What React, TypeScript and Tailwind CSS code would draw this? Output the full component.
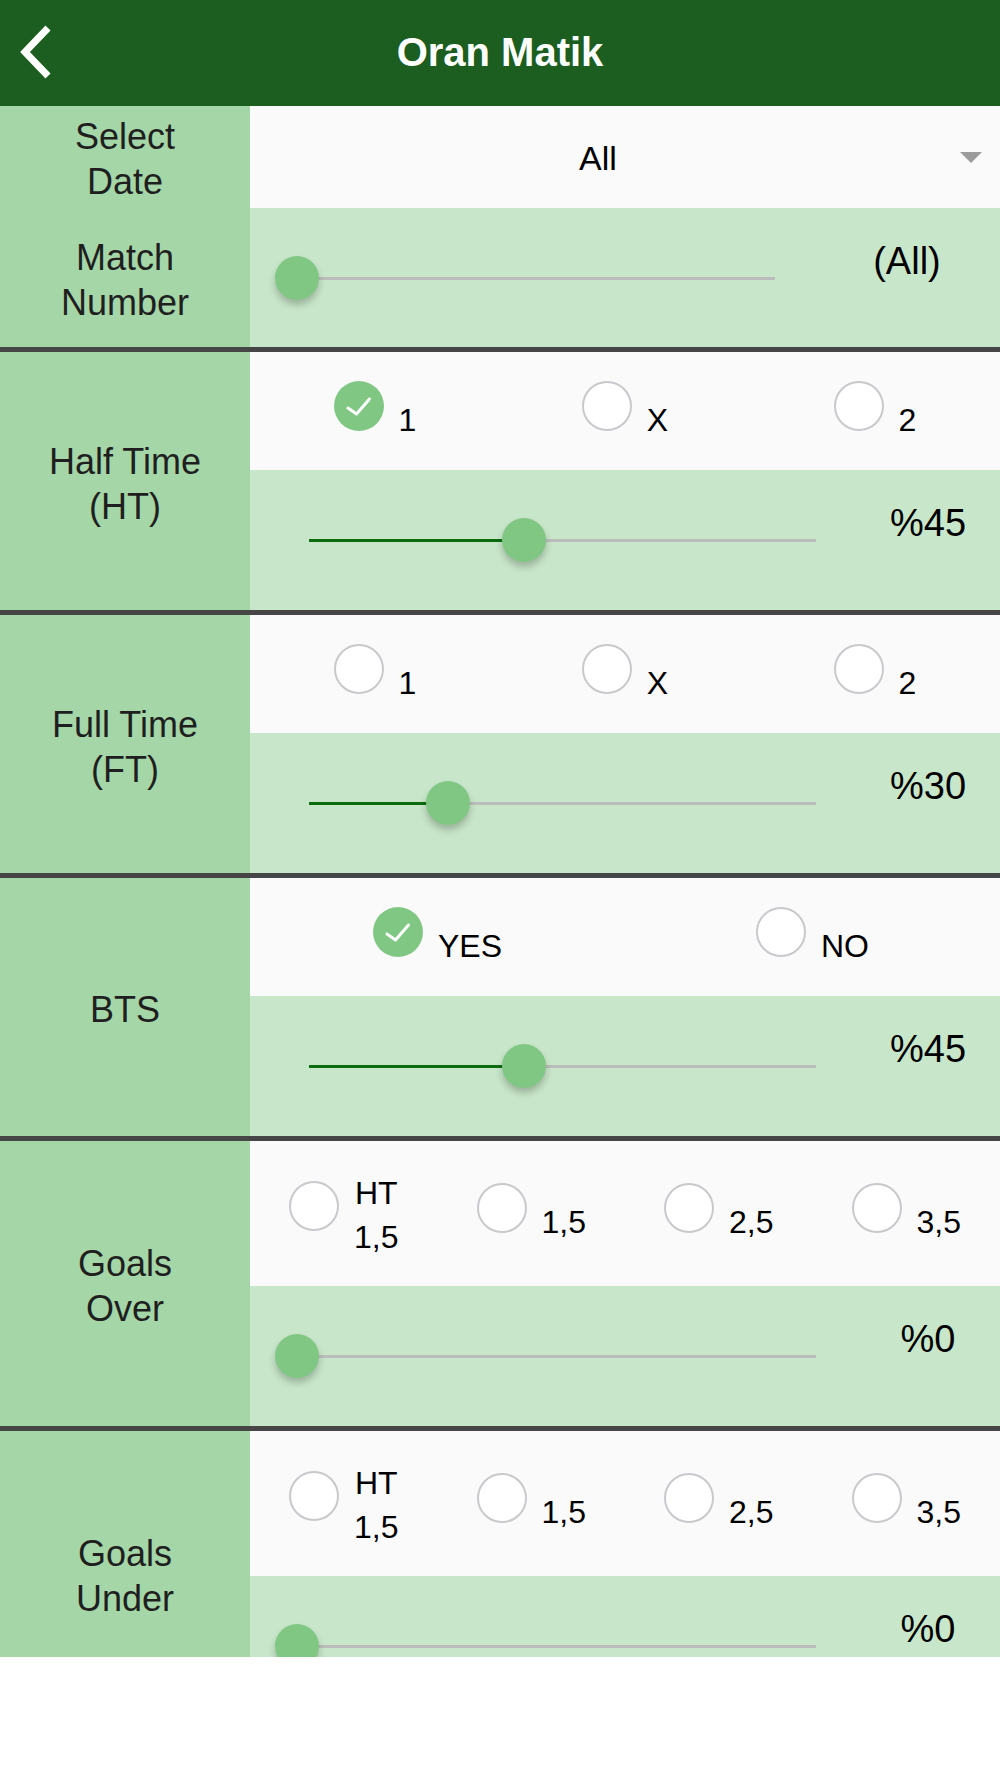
import React from "react";

type Opt = { label: string[]; checked?: boolean };

const FONT = "font-['Liberation_Sans',Arial,sans-serif]";

function Radio({ checked, className = "" }: { checked?: boolean; className?: string }) {
  if (checked) {
    return (
      <div className={`w-[50px] h-[50px] shrink-0 rounded-full bg-[#81c784] ${className}`}>
        <svg width="50" height="50" viewBox="0 0 50 50" fill="none">
          <path d="M14 27 L22.5 33 L35.5 18" stroke="white" strokeWidth={3} strokeLinecap="round" strokeLinejoin="round" />
        </svg>
      </div>
    );
  }
  return <div className={`w-[50px] h-[50px] shrink-0 rounded-full bg-white border-2 border-[#c9c9cd] ${className}`} />;
}

function Option({ opt }: { opt: Opt }) {
  const twoLine = opt.label.length > 1;
  return (
    <div className="flex flex-1 justify-center">
      <div className="flex items-start">
        <Radio checked={opt.checked} className={twoLine ? "mt-[12px]" : ""} />
        <div className={`ml-[15px] text-[32px] leading-[44px] text-center text-black ${twoLine ? "mt-[2px]" : "mt-[17px]"}`}>
          {opt.label.map((l) => (
            <div key={l}>{l}</div>
          ))}
        </div>
      </div>
    </div>
  );
}

function OptionsRow({ options, tall }: { options: Opt[]; tall?: boolean }) {
  return (
    <div className={`flex items-center bg-[#fafafa] ${tall ? "h-[145px]" : "h-[118px]"}`}>
      {options.map((o) => (
        <Option key={o.label.join(" ")} opt={o} />
      ))}
    </div>
  );
}

// thumb centre moves 5.04px per percent, starting at 47px from the panel edge
function Slider({ value, text, short }: { value: number; text: string; short?: boolean }) {
  const thumbX = 47 + value * 5.04;
  return (
    <div className="flex h-full">
      <div className={`relative h-full shrink-0 ${short ? "w-[564px]" : "w-[606px]"}`}>
        <div className={`absolute left-[59px] top-[69px] h-[3px] bg-[#bcbcbc] ${short ? "w-[466px]" : "w-[507px]"}`} />
        {value > 0 && (
          <div className="absolute left-[59px] top-[69px] h-[3px] bg-[#0d6b10]" style={{ width: thumbX - 59 }} />
        )}
        <div
          className="absolute top-[48px] w-[44px] h-[44px] rounded-full bg-[#81c784] shadow-[0_5px_7px_rgba(0,0,0,0.22)]"
          style={{ left: thumbX - 22 }}
        />
      </div>
      <div className="flex-1 pt-[31px] text-center text-[38px] leading-[44px] text-black">{text}</div>
    </div>
  );
}

function Section({
  label,
  options,
  value,
  text,
  tall,
}: {
  label: string[];
  options: Opt[];
  value: number;
  text: string;
  tall?: boolean;
}) {
  return (
    <div className="flex shrink-0">
      <div className="w-[250px] shrink-0 bg-[#a5d6a7] pt-[5px] flex flex-col items-center justify-center text-[36px] leading-[45px] text-[#1f1f1f] text-center">
        {label.map((l) => (
          <div key={l}>{l}</div>
        ))}
      </div>
      <div className="flex-1 flex flex-col">
        <OptionsRow options={options} tall={tall} />
        <div className="h-[140px] bg-[#c8e6c9]">
          <Slider value={value} text={text} />
        </div>
      </div>
    </div>
  );
}

function Divider() {
  return <div className="h-[5px] shrink-0 bg-[#464646]" />;
}

const goals: Opt[] = [{ label: ["HT", "1,5"] }, { label: ["1,5"] }, { label: ["2,5"] }, { label: ["3,5"] }];

export default function App() {
  return (
    <main className={`w-[1000px] h-[1778px] bg-white ${FONT}`}>
      {/* header */}
      <div className="flex items-center h-[106px] bg-[#1b5e20] pb-[3px]">
        <div className="w-[120px] pl-[19px]">
          <svg width="34" height="54" viewBox="0 0 34 54" fill="none">
            <path d="M29 3 L6 27 L29 51" stroke="white" strokeWidth={7} />
          </svg>
        </div>
        <h1 className="flex-1 text-center text-[40px] font-bold text-white">Oran Matik</h1>
        <div className="w-[120px]" />
      </div>

      <div className="h-[1551px] overflow-hidden flex flex-col">
        {/* date + match number */}
        <div className="flex h-[102px] shrink-0">
          <div className="w-[250px] shrink-0 bg-[#a5d6a7] pt-[3px] flex flex-col items-center justify-center text-[36px] leading-[45px] text-[#1f1f1f]">
            <div>Select</div>
            <div>Date</div>
          </div>
          <div className="flex-1 flex items-center bg-[#fafafa]">
            <div className="w-[696px] pt-[2px] text-center text-[34px] text-black">All</div>
            <div className="ml-[14px] w-0 h-0 border-l-[11px] border-r-[11px] border-t-[11px] border-l-transparent border-r-transparent border-t-[#9b9b9b]" />
          </div>
        </div>
        <div className="flex h-[139px] shrink-0">
          <div className="w-[250px] shrink-0 bg-[#a5d6a7] pt-[4px] flex flex-col items-center justify-center text-[36px] leading-[45px] text-[#1f1f1f]">
            <div>Match</div>
            <div>Number</div>
          </div>
          <div className="flex-1 bg-[#c8e6c9]">
            <Slider value={0} text="(All)" short />
          </div>
        </div>
        <Divider />

        <Section
          label={["Half Time", "(HT)"]}
          options={[{ label: ["1"], checked: true }, { label: ["X"] }, { label: ["2"] }]}
          value={45}
          text="%45"
        />
        <Divider />
        <Section
          label={["Full Time", "(FT)"]}
          options={[{ label: ["1"] }, { label: ["X"] }, { label: ["2"] }]}
          value={30}
          text="%30"
        />
        <Divider />
        <Section label={["BTS"]} options={[{ label: ["YES"], checked: true }, { label: ["NO"] }]} value={45} text="%45" />
        <Divider />
        <Section label={["Goals", "Over"]} options={goals} value={0} text="%0" tall />
        <Divider />
        <Section label={["Goals", "Under"]} options={goals} value={0} text="%0" tall />
      </div>
    </main>
  );
}
